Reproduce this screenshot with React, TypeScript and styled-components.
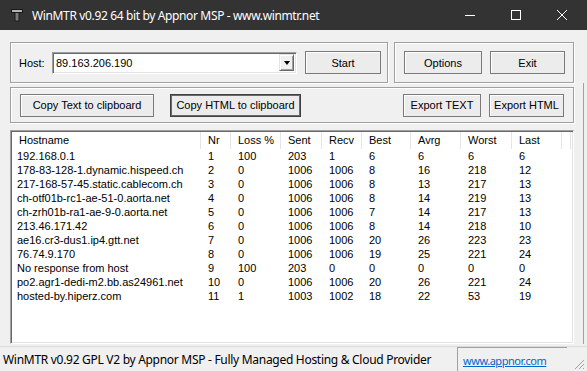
import React from "react"
import styled, { createGlobalStyle, css } from "styled-components"

const GlobalStyle = createGlobalStyle`
  html, body {
    margin: 0;
    padding: 0;
    background: #f0f0f0;
  }
`

const dialogFont = `"Liberation Sans", Arial, sans-serif`
const uiFont = `"Noto Sans", "Open Sans", sans-serif`

const Window = styled.div`
  display: flex;
  flex-direction: column;
  width: 587px;
  height: 371px;
  overflow: hidden;
  background: #f0f0f0;
  font-family: ${dialogFont};
  font-size: 11px;
  color: #000;
`

const TitleBar = styled.div`
  display: flex;
  align-items: center;
  flex: 0 0 30px;
  height: 30px;
  background: #333333;
  color: #fff;
  font-family: ${uiFont};
  font-size: 12px;
  letter-spacing: -0.36px;
`
const AppIcon = styled.div`
  display: flex;
  width: 30px;
  justify-content: center;
  padding-left: 2px;
`
const Title = styled.div`
  flex: 1;
  white-space: nowrap;
`
const Caption = styled.div`
  display: flex;
  height: 30px;
  padding-right: 2px;
`
const CaptionButton = styled.div`
  display: flex;
  align-items: center;
  justify-content: center;
  width: 46px;
  height: 30px;
`

const Content = styled.div`
  display: flex;
  flex-direction: column;
  flex: 1;
  padding-top: 12px;
`
const TopRow = styled.div`
  display: flex;
  gap: 6px;
  padding-left: 10px;
`
const Group = styled.div<{ $w: number; $h: number; $pl?: number }>`
  display: flex;
  align-items: center;
  gap: 8px;
  box-sizing: border-box;
  width: ${p => p.$w}px;
  height: ${p => p.$h}px;
  padding-left: ${p => p.$pl ?? 8}px;
  border: 1px solid #a0a0a0;
  box-shadow: inset 1px 1px 0 #fff, 1px 1px 0 #fff;
`
const Spacer = styled.div`
  flex: 1;
`
const LowerPane = styled.div`
  display: flex;
  flex-direction: column;
  width: 584px;
  padding: 4px 0 0 10px;
  box-sizing: border-box;
  border-right: 1px solid #a0a0a0;
  flex: 1;
`
const HostLabel = styled.span`
  width: 25px;
`
const Combo = styled.div`
  display: flex;
  align-items: center;
  box-sizing: border-box;
  width: 245px;
  height: 22px;
  background: #fff;
  border-top: 1px solid #a0a0a0;
  border-left: 1px solid #a0a0a0;
  border-right: 1px solid #fff;
  border-bottom: 1px solid #fff;
  box-shadow: inset 1px 1px 0 #696969, inset -1px -1px 0 #e3e3e3;
  padding: 2px;
`
const ComboText = styled.div`
  flex: 1;
  padding-left: 1px;
`
const ComboButton = styled.div`
  display: flex;
  align-items: center;
  justify-content: center;
  width: 15px;
  height: 17px;
  box-sizing: border-box;
  background: #f0f0f0;
  border-top: 1px solid #e3e3e3;
  border-left: 1px solid #e3e3e3;
  border-right: 1px solid #696969;
  border-bottom: 1px solid #696969;
  box-shadow: inset 1px 1px 0 #fff, inset -1px -1px 0 #a0a0a0;
`
const Arrow = styled.div`
  width: 0;
  height: 0;
  margin-top: 1px;
  border-left: 3.5px solid transparent;
  border-right: 3.5px solid transparent;
  border-top: 4px solid #000;
`

const Button = styled.button<{ $w: number; $default?: boolean }>`
  box-sizing: border-box;
  width: ${p => p.$w}px;
  height: 23px;
  padding: 0;
  background: #ececec;
  color: #000;
  font-family: ${dialogFont};
  font-size: 11px;
  border: 1px solid #7a7a7a;
  box-shadow: inset 1px 1px 0 #fff;
  ${p => p.$default && css`
    border: 1px solid #404040;
    box-shadow: inset 0 0 0 1px #6a6a6a;
  `}
`

const ListBox = styled.div`
  margin-top: 7px;
  box-sizing: border-box;
  width: 564px;
  height: 214px;
  background: #fff;
  border-top: 1px solid #a0a0a0;
  border-left: 1px solid #a0a0a0;
  border-right: 1px solid #fff;
  border-bottom: 1px solid #fff;
  box-shadow: inset 1px 1px 0 #696969, inset -1px -1px 0 #e3e3e3;
  padding: 1px 2px 2px 1px;
`
const cols = "189px 30px 50px 41px 40px 49px 50px 51px 50px 1fr"
const HeaderRow = styled.div`
  display: grid;
  grid-template-columns: ${cols};
  height: 17px;
`
const HeaderCell = styled.div`
  padding-left: 7px;
  line-height: 17px;
  border-right: 1px solid #e5e5e5;
  white-space: nowrap;
`
const Row = styled.div`
  display: grid;
  grid-template-columns: ${cols};
  height: 14px;
  line-height: 14px;
`
const Cell = styled.div<{ $first?: boolean }>`
  padding-left: ${p => (p.$first ? 5 : 7)}px;
  white-space: nowrap;
  overflow: hidden;
`

const StatusBar = styled.div`
  display: flex;
  margin-top: 2px;
  height: 25px;
  flex: 0 0 25px;
  font-family: ${uiFont};
  font-size: 12px;
  letter-spacing: -0.29px;
  border-top: 1px solid #dadada;
`
const Panel = styled.div<{ $w: number }>`
  display: flex;
  align-items: center;
  box-sizing: border-box;
  width: ${p => p.$w}px;
  padding-left: 3px;
  white-space: nowrap;
  & + & {
    margin-left: 2px;
    padding-left: 5px;
    border-left: 1px solid #a0a0a0;
    border-top: 1px solid #a0a0a0;
  }
`
const Link = styled.a`
  color: #0066cc;
  text-decoration: underline;
  font-size: 11px;
  letter-spacing: -0.45px;
`
const Grip = styled.div`
  display: flex;
  align-items: flex-end;
  justify-content: flex-end;
  flex: 1;
  padding: 0 2px 2px 0;
`

const headers = ["Hostname", "Nr", "Loss %", "Sent", "Recv", "Best", "Avrg", "Worst", "Last", ""]

const rows: (string | number)[][] = [
  ["192.168.0.1", 1, 100, 203, 1, 6, 6, 6, 6],
  ["178-83-128-1.dynamic.hispeed.ch", 2, 0, 1006, 1006, 8, 16, 218, 12],
  ["217-168-57-45.static.cablecom.ch", 3, 0, 1006, 1006, 8, 13, 217, 13],
  ["ch-otf01b-rc1-ae-51-0.aorta.net", 4, 0, 1006, 1006, 8, 14, 219, 13],
  ["ch-zrh01b-ra1-ae-9-0.aorta.net", 5, 0, 1006, 1006, 7, 14, 217, 13],
  ["213.46.171.42", 6, 0, 1006, 1006, 8, 14, 218, 10],
  ["ae16.cr3-dus1.ip4.gtt.net", 7, 0, 1006, 1006, 20, 26, 223, 23],
  ["76.74.9.170", 8, 0, 1006, 1006, 19, 25, 221, 24],
  ["No response from host", 9, 100, 203, 0, 0, 0, 0, 0],
  ["po2.agr1-dedi-m2.bb.as24961.net", 10, 0, 1006, 1006, 20, 26, 221, 24],
  ["hosted-by.hiperz.com", 11, 1, 1003, 1002, 18, 22, 53, 19],
]

function ToolIcon() {
  return (
    <svg width="12" height="14" viewBox="0 0 12 14">
      <rect x="0.5" y="1.5" width="11" height="3" fill="#9a9a9a" stroke="#1a1a1a" />
      <rect x="4" y="4.5" width="4" height="8.5" fill="#7a7a7a" stroke="#1a1a1a" />
      <rect x="1.5" y="2.5" width="9" height="1" fill="#d0d0d0" />
    </svg>
  )
}

export default function App() {
  return (
    <Window>
      <GlobalStyle />
      <TitleBar>
        <AppIcon><ToolIcon /></AppIcon>
        <Title>WinMTR v0.92 64 bit by Appnor MSP - www.winmtr.net</Title>
        <Caption>
          <CaptionButton>
            <svg width="12" height="12" viewBox="0 0 12 12"><path d="M1 6.5h10" stroke="#fff" /></svg>
          </CaptionButton>
          <CaptionButton>
            <svg width="12" height="12" viewBox="0 0 12 12"><rect x="1.5" y="1.5" width="9" height="9" fill="none" stroke="#fff" /></svg>
          </CaptionButton>
          <CaptionButton>
            <svg width="12" height="12" viewBox="0 0 12 12"><path d="M1 1l10 10M11 1L1 11" stroke="#fff" /></svg>
          </CaptionButton>
        </Caption>
      </TitleBar>

      <Content>
        <TopRow>
          <Group $w={378} $h={41}>
            <HostLabel>Host:</HostLabel>
            <Combo>
              <ComboText>89.163.206.190</ComboText>
              <ComboButton><Arrow /></ComboButton>
            </Combo>
            <Button $w={76}>Start</Button>
          </Group>
          <Group $w={180} $h={41} $pl={9}>
            <Button $w={78}>Options</Button>
            <Button $w={75}>Exit</Button>
          </Group>
        </TopRow>

        <LowerPane>
          <Group $w={564} $h={36} $pl={9}>
            <Button $w={134}>Copy Text to clipboard</Button>
            <Button $w={131} $default style={{ marginLeft: 8 }}>Copy HTML to clipboard</Button>
            <Spacer />
            <Button $w={78}>Export TEXT</Button>
            <Button $w={75} style={{ marginRight: 9 }}>Export HTML</Button>
          </Group>

          <ListBox>
            <HeaderRow>
              {headers.map((h, i) => <HeaderCell key={i}>{h}</HeaderCell>)}
            </HeaderRow>
            {rows.map((r, i) => (
              <Row key={i}>
                {r.map((v, j) => <Cell key={j} $first={j === 0}>{v}</Cell>)}
              </Row>
            ))}
          </ListBox>
        </LowerPane>

        <StatusBar>
          <Panel $w={455}>WinMTR v0.92 GPL V2 by Appnor MSP - Fully Managed Hosting &amp; Cloud Provider</Panel>
          <Panel $w={110}><Link>www.appnor.com</Link></Panel>
          <Grip>
            <svg width="12" height="12" viewBox="0 0 12 12">
              <path d="M11 2L2 11M11 6L6 11M11 10L10 11" stroke="#a0a0a0" />
            </svg>
          </Grip>
        </StatusBar>
      </Content>
    </Window>
  )
}
